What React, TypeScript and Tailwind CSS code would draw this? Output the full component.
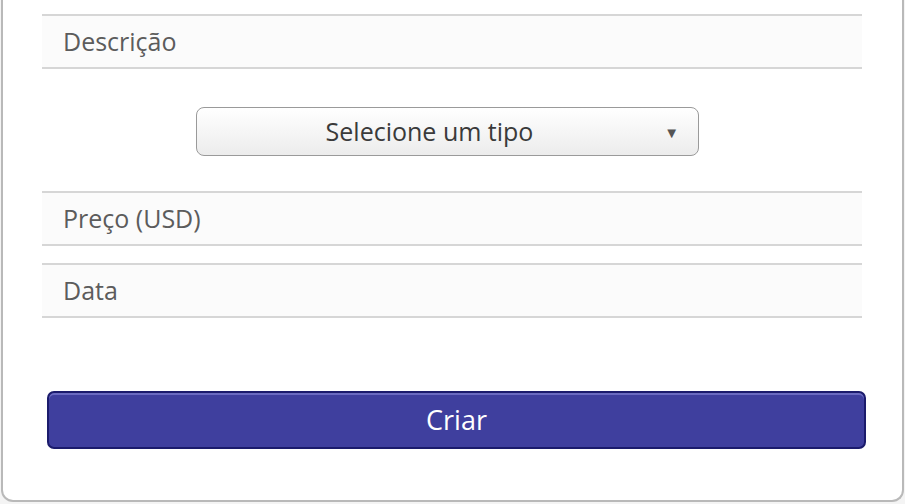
export default function App() {
  const fields = ["Preço (USD)", "Data"];
  return (
    <div className="h-[504px] w-[905px] overflow-hidden bg-[#f4f4f4] font-['Open_Sans',sans-serif]">
      <div className="ml-px w-[903px] h-[502px] bg-white border-x-2 border-b-2 border-[#b9b9b9] rounded-b-[12px] flex flex-col px-[39px] pt-[14px]">
        <Field label="Descrição" />
        <div className="mt-[38px] flex">
          <button className="relative ml-[154px] w-[503px] h-[49px] pr-[36px] rounded-[8px] border border-[#9a9a9a] bg-gradient-to-b from-white to-[#ececec] text-[#3a3a3a] text-[25px] flex items-center justify-center">
            Selecione um tipo
            <span className="absolute right-[19px] top-[13px] text-[15px] text-[#555]">▼</span>
          </button>
        </div>
        <div className="mt-[35px] flex flex-col gap-[17px]">
          {fields.map((f) => (
            <Field key={f} label={f} />
          ))}
        </div>
        <button className="mt-[73px] ml-[5px] w-[819px] h-[58px] rounded-[7px] border-2 border-[#1b1b6c] bg-[#3f3f9e] shadow-[inset_0_2px_0_#6a6ac0] text-white text-[27px] flex items-center justify-center">
          Criar
        </button>
      </div>
    </div>
  );
}

function Field({ label }: { label: string }) {
  return (
    <div className="w-[820px] h-[55px] border-y-2 border-[#d6d6d6] bg-[#fbfbfb] flex items-center pl-[21px] text-[25px] text-[#5c5c5c]">
      {label}
    </div>
  );
}
